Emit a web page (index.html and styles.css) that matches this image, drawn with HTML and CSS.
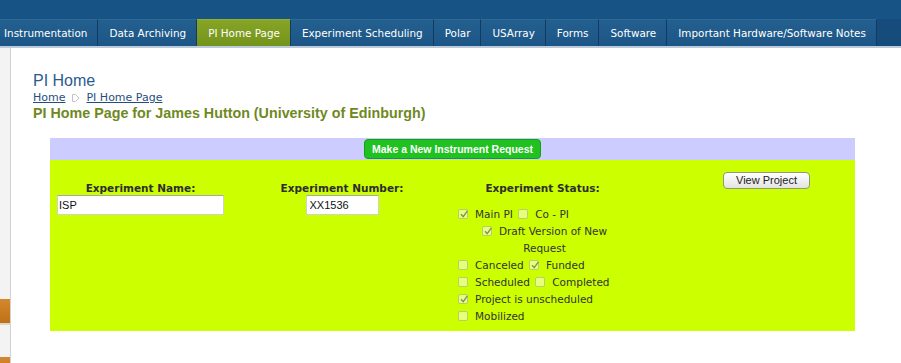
FILE: index.html
```html
<!DOCTYPE html>
<html lang="en">
<head>
    <meta charset="UTF-8">
    <title>PI Home</title>
    <link rel="stylesheet" href="styles.css">
</head>
<body>
    <div class="topbar"></div>

    <!-- Main navigation tabs -->
    <nav class="tabs">
        <a class="tab" href="#">Instrumentation</a>
        <a class="tab" href="#">Data Archiving</a>
        <a class="tab active" href="#">PI Home Page</a>
        <a class="tab" href="#">Experiment Scheduling</a>
        <a class="tab" href="#">Polar</a>
        <a class="tab" href="#">USArray</a>
        <a class="tab" href="#">Forms</a>
        <a class="tab" href="#">Software</a>
        <a class="tab" href="#">Important Hardware/Software Notes</a>
    </nav>

    <div class="layout">
        <aside class="sidebar">
            <div class="side-link first"></div>
            <div class="side-link"></div>
        </aside>

        <main class="content">
            <h1 class="page-title">PI Home</h1>
            <div class="crumbs">
                <a href="#">Home</a>
                <svg class="crumb-arrow" width="8" height="10" viewBox="0 0 8 10">
                    <polygon points="0.5,1.5 3.5,1.5 7,5 3.5,8.5 0.5,8.5" fill="#fff" stroke="#c4c4c4" stroke-width="1"/>
                </svg>
                <a href="#">PI Home Page</a>
            </div>
            <h2 class="pi-heading">PI Home Page for James Hutton (University of Edinburgh)</h2>

            <div class="request-box">
                <div class="box-head">
                    <button class="new-request">Make a New Instrument Request</button>
                </div>

                <div class="box-body">
                    <div class="field">
                        <div class="field-label">Experiment Name:</div>
                        <input class="text-input name-input" type="text" value="ISP">
                    </div>

                    <div class="field">
                        <div class="field-label">Experiment Number:</div>
                        <input class="text-input num-input" type="text" value="XX1536">
                    </div>

                    <div class="status">
                        <div class="field-label">Experiment Status:</div>
                        <div class="checks">
                            <div class="check-row">
                                <span class="cb on"><svg viewBox="0 0 10 10"><path d="M2 5.2 L4.2 7.6 L8.4 1.8"/></svg></span>Main PI
                                <span class="cb"></span>Co - PI
                            </div>
                            <div class="check-row draft-row">
                                <span class="cb on"><svg viewBox="0 0 10 10"><path d="M2 5.2 L4.2 7.6 L8.4 1.8"/></svg></span>Draft Version of New Request
                            </div>
                            <div class="check-row">
                                <span class="cb"></span>Canceled
                                <span class="cb on"><svg viewBox="0 0 10 10"><path d="M2 5.2 L4.2 7.6 L8.4 1.8"/></svg></span>Funded
                            </div>
                            <div class="check-row">
                                <span class="cb"></span>Scheduled
                                <span class="cb"></span>Completed
                            </div>
                            <div class="check-row">
                                <span class="cb on"><svg viewBox="0 0 10 10"><path d="M2 5.2 L4.2 7.6 L8.4 1.8"/></svg></span>Project is unscheduled
                            </div>
                            <div class="check-row">
                                <span class="cb"></span>Mobilized
                            </div>
                        </div>
                    </div>

                    <div class="actions">
                        <button class="view-btn">View Project</button>
                    </div>
                </div>
            </div>
        </main>
    </div>
</body>
</html>
```

FILE: styles.css
```css
/* General Styles */
body {
    margin: 0;
    font-family: "DejaVu Sans", Verdana, sans-serif;
    background: #ffffff;
    color: #2b2b2b;
}

/* Header bar and tabs */
.topbar {
    height: 19px;
    background-color: #175385;
}

.tabs {
    display: flex;
    height: 27px;
    background-color: #164c7c;
    border-bottom: 2px solid #bccbdb;
}

.tab {
    display: flex;
    align-items: center;
    padding: 0 10px 0 11px;
    font-size: 10.4px;
    color: #ffffff;
    text-decoration: none;
    background: linear-gradient(#235f8f, #1c5686);
    border-right: 1px solid #103c63;
    border-top: 1px solid #2e6a98;
}

.tab:first-child {
    padding-left: 4px;
}

.tab.active {
    background: linear-gradient(#86a526, #74931a);
    border-top-color: #93b03a;
}

/* Page layout */
.layout {
    display: flex;
    height: 315px;
    overflow: hidden;
}

.sidebar {
    width: 10px;
    flex-shrink: 0;
    background-color: #f3f3f3;
    border-right: 1px solid #d2d2d2;
    display: flex;
    flex-direction: column;
}

.side-link {
    height: 24px;
    flex-shrink: 0;
    margin-top: 32px;
    background: linear-gradient(#d4872e, #c07116);
    border-bottom: 2px solid #ddd6cc;
}

.side-link.first {
    margin-top: 251px;
}

.content {
    flex: 1;
    padding: 23px 0 0 22px;
}

/* Titles */
.page-title {
    margin: 0;
    font: normal 16px/19px "Liberation Sans", Arial, sans-serif;
    color: #2a5b8c;
}

.crumbs {
    display: flex;
    align-items: center;
    font-size: 11px;
    line-height: 15px;
}

.crumbs a {
    color: #1f4f80;
    text-decoration: underline;
}

.crumb-arrow {
    margin: 0 6px 0 7px;
}

.pi-heading {
    margin: 0;
    font: bold 14.3px/17px "Liberation Sans", Arial, sans-serif;
    color: #6f891f;
}

/* Request box */
.request-box {
    width: 805px;
    margin: 16px 0 0 17px;
}

.box-head {
    display: flex;
    justify-content: center;
    height: 22px;
    padding-top: 1px;
    box-sizing: border-box;
    background-color: #ccccff;
}

.new-request {
    height: 20px;
    padding: 0 7px;
    background-color: #20c220;
    border: 1px solid #14a014;
    border-radius: 4px;
    color: #ffffff;
    font: bold 10.5px "Liberation Sans", Arial, sans-serif;
    cursor: pointer;
}

.box-body {
    display: grid;
    grid-template-columns: 181px 222px 178px 1fr;
    padding: 9px 0 6px;
    background-color: #ccff00;
}

.field {
    display: flex;
    flex-direction: column;
    align-items: center;
    padding-top: 12px;
}

.field-label {
    font-size: 10.5px;
    font-weight: bold;
    line-height: 14px;
    color: #2e2e2e;
}

.text-input {
    height: 20px;
    box-sizing: border-box;
    padding: 0 1px;
    border: 1px solid #d0d0d0;
    border-top-color: #a8a8a8;
    background: #ffffff;
    font: 11px "Liberation Sans", Arial, sans-serif;
    color: #111;
}

.name-input {
    width: 167px;
}

.num-input {
    width: 73px;
    padding-left: 3px;
}

/* Status checkboxes */
.status {
    padding: 12px 4px 0 5px;
}

.status .field-label {
    text-align: center;
    margin-bottom: 11px;
}

.checks {
    font-size: 10.5px;
    line-height: 17px;
    color: #333333;
}

.draft-row {
    text-align: center;
    padding-left: 4px;
}

.cb {
    display: inline-block;
    position: relative;
    width: 10px;
    height: 10px;
    box-sizing: border-box;
    margin: 0 7px 0 2px;
    vertical-align: -1px;
    background: rgba(255, 255, 255, 0.5);
    border: 1px solid rgba(80, 95, 40, 0.3);
    border-radius: 2px;
}

.check-row .cb:first-child {
    margin-left: 0;
}

.cb svg {
    position: absolute;
    left: 0;
    top: -1px;
    width: 10px;
    height: 10px;
}

.cb svg path {
    fill: none;
    stroke: #7f8c5c;
    stroke-width: 1.3;
}

/* View project button */
.actions {
    padding-left: 92px;
}

.view-btn {
    width: 87px;
    height: 17px;
    padding: 0;
    border: 1px solid #8f9a72;
    border-radius: 4px;
    background: linear-gradient(#ffffff, #e3e3e3);
    font: 11px "Liberation Sans", Arial, sans-serif;
    color: #222222;
    cursor: pointer;
}
```
